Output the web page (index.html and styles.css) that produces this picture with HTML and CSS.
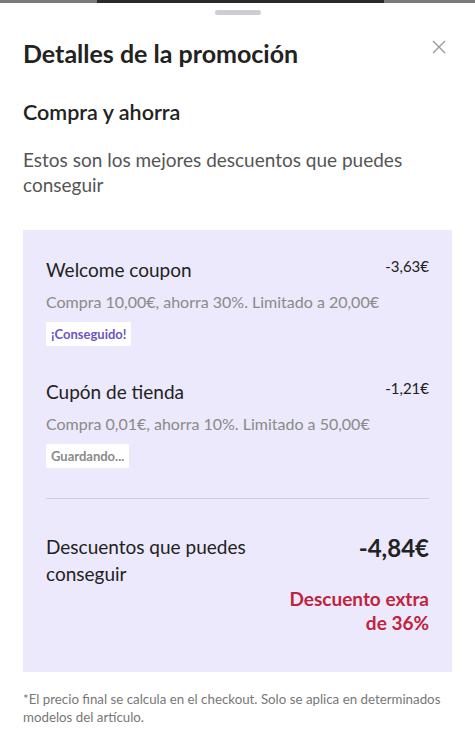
FILE: index.html
```html
<!DOCTYPE html>
<html>
<head>
    <title>Detalles de la promoción</title>
    <link rel="stylesheet" href="styles.css">
</head>
<body>
    <div class="topbar"><div class="topbar-dark"></div></div>
    <div class="sheet">
        <div class="handle"></div>
        <div class="header">
            <h1>Detalles de la promoción</h1>
            <svg class="close" width="16" height="16" viewBox="0 0 16 16">
                <path d="M2 2 L14 14 M14 2 L2 14" stroke="#9a9a9a" stroke-width="1.4" fill="none"/>
            </svg>
        </div>
        <h2>Compra y ahorra</h2>
        <p class="intro">Estos son los mejores descuentos que puedes conseguir</p>

        <div class="promo-box">
            <div class="coupon">
                <div class="coupon-top">
                    <span class="coupon-name">Welcome coupon</span>
                    <span class="coupon-amount">-3,63€</span>
                </div>
                <div class="coupon-desc">Compra 10,00€, ahorra 30%. Limitado a 20,00€</div>
                <span class="tag tag-done">¡Conseguido!</span>
            </div>
            <div class="coupon">
                <div class="coupon-top">
                    <span class="coupon-name">Cupón de tienda</span>
                    <span class="coupon-amount">-1,21€</span>
                </div>
                <div class="coupon-desc">Compra 0,01€, ahorra 10%. Limitado a 50,00€</div>
                <span class="tag tag-saving">Guardando...</span>
            </div>
            <div class="divider"></div>
            <div class="total">
                <span class="total-label">Descuentos que puedes conseguir</span>
                <span class="total-amount">-4,84€</span>
            </div>
            <div class="extra">Descuento extra<br>de 36%</div>
        </div>

        <p class="note">*El precio final se calcula en el checkout. Solo se aplica en determinados modelos del artículo.</p>
    </div>
</body>
</html>
```

FILE: styles.css
```css
body {
  margin: 0;
  padding: 0;
  background-color: #fff;
  font-family: Lato, "Open Sans", sans-serif;
  color: #222;
}

.topbar {
  height: 3px;
  background-color: #7a7a7a;
  padding: 0 91px 0 97px;
}

.topbar-dark {
  height: 3px;
  background-color: #2a2a2a;
}

.sheet {
  padding: 0 23px;
}

.handle {
  width: 46px;
  height: 5px;
  margin: 7px auto 0;
  border-radius: 3px;
  background-color: #cdcdd5;
}

.header {
  display: flex;
  justify-content: space-between;
  align-items: flex-start;
  margin-top: 23px;
}

h1 {
  margin: 0;
  font-size: 25px;
  font-weight: bold;
  color: #222;
  line-height: 30px;
}

.close {
  margin-top: 1px;
  margin-right: 5px;
}

h2 {
  margin: 30px 0 0;
  font-size: 21.5px;
  font-weight: 600;
  line-height: 28px;
  color: #222;
}

.intro {
  margin: 21px 0 0;
  font-size: 19px;
  line-height: 25px;
  color: #555;
  padding-right: 30px;
}

.promo-box {
  margin-top: 33px;
  background-color: #ebe9fb;
  padding: 26px 23px 37px;
}

.coupon + .coupon {
  margin-top: 32px;
}

.coupon-top {
  display: flex;
  justify-content: space-between;
  align-items: flex-start;
}

.coupon-name {
  font-size: 19px;
  line-height: 28px;
  color: #222;
}

.coupon-amount {
  font-size: 15px;
  line-height: 20px;
  color: #222;
}

.coupon-desc {
  margin-top: 8px;
  font-size: 16px;
  line-height: 20px;
  color: #8a8a8a;
}

.tag {
  display: inline-block;
  margin-top: 10px;
  padding: 5px 5px;
  background-color: #fff;
  font-size: 13px;
  font-weight: bold;
  line-height: 14px;
  vertical-align: top;
}

.tag-done {
  color: #6b54c8;
}

.tag-saving {
  color: #8a8a8a;
}

.divider {
  height: 1px;
  background-color: #cfcdd8;
  margin-top: 30px;
}

.total {
  display: flex;
  justify-content: space-between;
  align-items: flex-start;
  margin-top: 34px;
}

.total-label {
  font-size: 19px;
  line-height: 27px;
  width: 220px;
  color: #222;
}

.total-amount {
  font-size: 24px;
  font-weight: bold;
  line-height: 30px;
  color: #222;
}

.extra {
  text-align: right;
  margin-top: 0;
  font-size: 19px;
  font-weight: bold;
  line-height: 24px;
  color: #c0233d;
}

.note {
  margin: 18px 0 0;
  font-size: 13.3px;
  line-height: 18px;
  color: #777;
}
```
